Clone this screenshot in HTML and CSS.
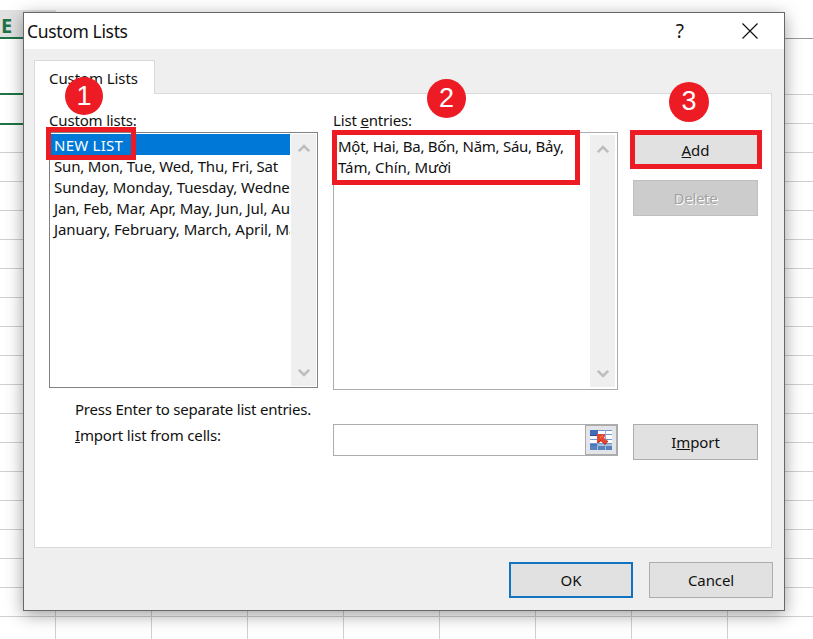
FILE: index.html
```html
<!DOCTYPE html>
<html lang="en">
<head>
  <meta charset="UTF-8">
  <meta name="viewport" content="width=device-width, initial-scale=1.0">
  <title>Custom Lists</title>
  <link rel="stylesheet" href="styles.css">
</head>
<body>
  <div class="sheet">
    <div class="column-header">E</div>
    <div class="header-line"></div>
    <div class="selected-cell"></div>

    <div class="dialog">
      <div class="title-bar">
        <div class="title">Custom Lists</div>
        <div class="help">?</div>
        <svg class="close" width="16" height="16" viewBox="0 0 16 16"><path d="M0.5 0.5 L15.5 15.5 M15.5 0.5 L0.5 15.5" stroke="#111" stroke-width="1.2"/></svg>
      </div>

      <div class="tab">Custom Lists</div>
      <div class="panel">
        <div class="columns">
          <div class="lists">
            <div class="label">Custom lists:</div>
            <div class="list-box">
              <ul>
                <li class="selected">NEW LIST</li>
                <li class="days">Sun, Mon, Tue, Wed, Thu, Fri, Sat</li>
                <li>Sunday, Monday, Tuesday, Wednesday</li>
                <li>Jan, Feb, Mar, Apr, May, Jun, Jul, Aug</li>
                <li>January, February, March, April, May</li>
              </ul>
              <div class="scrollbar">
                <svg width="12" height="10" viewBox="0 0 12 10"><path d="M0.8 8.2 L6 3 L11.2 8.2" fill="none" stroke="#bdbdbd" stroke-width="2.6"/></svg>
                <svg width="12" height="10" viewBox="0 0 12 10"><path d="M0.8 1.8 L6 7 L11.2 1.8" fill="none" stroke="#bdbdbd" stroke-width="2.6"/></svg>
              </div>
            </div>
          </div>

          <div class="entries">
            <div class="label">List <u>e</u>ntries:</div>
            <div class="entries-box">
              <div class="entries-text"><span class="first-line">Một, Hai, Ba, Bốn, Năm, Sáu, Bảy,</span><br><span>Tám, Chín, Mười</span></div>
              <div class="scrollbar">
                <svg width="12" height="10" viewBox="0 0 12 10"><path d="M0.8 8.2 L6 3 L11.2 8.2" fill="none" stroke="#bdbdbd" stroke-width="2.6"/></svg>
                <svg width="12" height="10" viewBox="0 0 12 10"><path d="M0.8 1.8 L6 7 L11.2 1.8" fill="none" stroke="#bdbdbd" stroke-width="2.6"/></svg>
              </div>
            </div>
          </div>

          <div class="actions">
            <button><span><u>A</u>dd</span></button>
            <button class="disabled">Delete</button>
          </div>
        </div>

        <div class="import-row">
          <div class="hints">
            <div class="hint">Press Enter to separate list entries.</div>
            <div class="import-label"><u>I</u>mport list from cells:</div>
          </div>
          <div class="cell-input">
            <div class="cell-value"></div>
            <div class="picker">
              <svg width="22" height="20" viewBox="0 0 22 20">
                <rect width="22" height="20" fill="#fff"/>
                <rect width="22" height="1" fill="#7596cd"/>
                <rect width="8" height="5" fill="#406cb8"/>
                <path d="M8 4.5H22 M0 9.5H22 M0 13.5H22" stroke="#6f98d2" stroke-width="1"/>
                <path d="M7.5 5V20 M15.5 0V20" stroke="#8eb0e0" stroke-width="1"/>
                <path d="M0 5.5H8" stroke="#294b8c"/>
                <rect y="14" width="7" height="2" fill="#4777bf"/>
                <rect x="8" y="14" width="14" height="2" fill="#a7bfdf"/>
                <rect y="16" width="22" height="4" fill="#5a82bd"/>
                <path d="M7.5 16V20 M15.5 16V20" stroke="#9db9de"/>
                <path d="M7 4H15V6L14 8L18 11L15 15L11 11L9 13H7Z" fill="#e5492d"/>
                <path d="M7.5 12.5L11 10.5L15 14.5L18 11" fill="none" stroke="#b92e22"/>
                <path d="M10 8L13 5.5" stroke="#fa8a68"/>
              </svg>
            </div>
          </div>
          <button><span>I<u>m</u>port</span></button>
        </div>
      </div>

      <div class="footer">
        <button class="default">OK</button>
        <button>Cancel</button>
      </div>
    </div>

    <!-- numbered steps -->
    <div class="mark mark-list"></div>
    <div class="mark mark-entries"></div>
    <div class="mark mark-add"></div>
    <div class="step step-one">1</div>
    <div class="step step-two">2</div>
    <div class="step step-three">3</div>
  </div>
</body>
</html>
```
FILE: styles.css
```css
* {
  margin: 0;
  padding: 0;
  box-sizing: border-box;
}

body {
  font-family: 'Noto Sans', 'Open Sans', sans-serif;
  font-size: 15px;
  color: #111;
  background-color: #fff;
  overflow: hidden;
}

.sheet {
  position: relative;
  width: 813px;
  height: 639px;
  padding: 12px 0 0 23px;
  overflow: hidden;
  background-image:
    linear-gradient(#fff, #fff),
    repeating-linear-gradient(to bottom, #d0d0d0 0, #d0d0d0 1px, transparent 1px, transparent 29px),
    repeating-linear-gradient(to right, #d0d0d0 0, #d0d0d0 1px, transparent 1px, transparent 96px);
  background-position: 0 0, 0 94px, 55px 0;
  background-size: 100% 94px, 100% 545px, 100% 100%;
  background-repeat: no-repeat;
}

.column-header {
  position: absolute;
  left: 0;
  top: 10px;
  width: 56px;
  height: 29px;
  padding-left: 1px;
  font-family: 'Open Sans', sans-serif;
  font-size: 20px;
  font-weight: bold;
  line-height: 31px;
  color: #217346;
  background: #e1e1e1;
  border-bottom: 2px solid #217346;
}

.header-line {
  position: absolute;
  left: 784px;
  top: 38px;
  width: 29px;
  height: 1px;
  background: #999;
}

.selected-cell {
  position: absolute;
  left: -2px;
  top: 93px;
  width: 60px;
  height: 32px;
  border: 2px solid #217346;
}

.dialog {
  position: relative;
  width: 762px;
  height: 599px;
  padding: 0 12px 0 10px;
  background: #efefef;
  border: 1px solid #686868;
  box-shadow: 0 4px 16px rgba(0, 0, 0, 0.38);
}

.title-bar {
  display: flex;
  align-items: center;
  height: 36px;
  margin: 0 -12px 0 -10px;
  padding: 0 26px 0 3px;
  background: #fff;
}

.title {
  flex: 1;
  font-size: 17.5px;
  letter-spacing: -0.35px;
}

.help {
  margin-right: 58px;
  font-size: 19px;
}

.tab {
  position: relative;
  width: 121px;
  height: 34px;
  margin-top: 11px;
  padding-left: 14px;
  line-height: 35px;
  letter-spacing: -0.08px;
  background: #fff;
  border: 1px solid #d9d9d9;
  border-bottom: none;
}

.panel {
  width: 738px;
  height: 455px;
  margin-top: -1px;
  padding: 15px 13px 0 14px;
  background: #fff;
  border: 1px solid #d9d9d9;
}

.columns {
  display: flex;
  gap: 15px;
  height: 281px;
}

.label {
  height: 23px;
  line-height: 22px;
  letter-spacing: -0.17px;
}

.lists {
  width: 269px;
}

.list-box {
  display: flex;
  height: 256px;
  padding: 1px;
  border: 1px solid #828282;
}

.list-box ul {
  flex: 1;
  margin-right: 1px;
  overflow: hidden;
  list-style: none;
  white-space: nowrap;
}

.list-box li {
  height: 21px;
  padding-left: 3px;
  line-height: 22px;
  letter-spacing: -0.08px;
}

.list-box .days {
  letter-spacing: -0.17px;
}

.list-box .selected {
  color: #fff;
  letter-spacing: 0.25px;
  background: #0078d7;
}

.scrollbar {
  display: flex;
  flex-direction: column;
  justify-content: space-between;
  align-items: center;
  width: 25px;
  padding: 9px 0 8px;
  background: #efefef;
}

.entries {
  width: 285px;
}

.entries-box {
  display: flex;
  height: 258px;
  padding: 2px;
  border: 1px solid #acacac;
}

.entries-text {
  flex: 1;
  padding: 1px 0 0 2px;
  line-height: 21px;
  letter-spacing: -0.08px;
  white-space: nowrap;
}

.first-line {
  letter-spacing: -0.26px;
}

.actions {
  display: flex;
  flex-direction: column;
  gap: 12px;
  padding-top: 23px;
}

button {
  width: 125px;
  height: 36px;
  font-family: inherit;
  font-size: 15px;
  letter-spacing: -0.1px;
  color: #111;
  background: #e1e1e1;
  border: 1px solid #adadad;
}

.disabled {
  color: #a3a3a3;
  letter-spacing: -0.3px;
  background: #cccccc;
  border-color: #bfbfbf;
  text-shadow: 1px 1px 0 #fff;
}

.import-row {
  display: flex;
  gap: 15px;
}

.hints {
  width: 269px;
  padding: 6px 0 0 26px;
  line-height: 26px;
  white-space: nowrap;
}

.hint {
  letter-spacing: -0.22px;
}

.import-label {
  letter-spacing: -0.17px;
}

.cell-input {
  display: flex;
  width: 285px;
  height: 32px;
  margin-top: 34px;
  border: 1px solid #acacac;
}

.cell-value {
  flex: 1;
}

.picker {
  display: flex;
  justify-content: center;
  align-items: center;
  width: 32px;
  background: #e3e5e9;
  border: 1px solid #acacac;
}

.import-row button {
  margin-top: 34px;
}

.footer {
  display: flex;
  justify-content: flex-end;
  gap: 16px;
  margin-top: 14px;
  margin-right: -1px;
}

.footer button {
  width: 124px;
}

.footer .default {
  border: 2px solid #1473c0;
}

.mark {
  position: absolute;
  border: 5px solid #ed1c24;
}

.mark-list {
  left: 46px;
  top: 127px;
  width: 90px;
  height: 33px;
}

.mark-entries {
  left: 332px;
  top: 130px;
  width: 248px;
  height: 55px;
}

.mark-add {
  left: 630px;
  top: 130px;
  width: 132px;
  height: 39px;
}

.step {
  position: absolute;
  width: 39px;
  height: 39px;
  border-radius: 50%;
  font-family: 'Liberation Sans', Arial, sans-serif;
  font-size: 27px;
  line-height: 38px;
  text-align: center;
  color: #fff;
  background: #ed1c24;
}

.step-one {
  left: 65px;
  top: 77px;
  width: 38px;
  height: 38px;
}

.step-two {
  left: 427px;
  top: 79px;
}

.step-three {
  left: 669px;
  top: 82px;
  width: 40px;
  height: 40px;
}
```
